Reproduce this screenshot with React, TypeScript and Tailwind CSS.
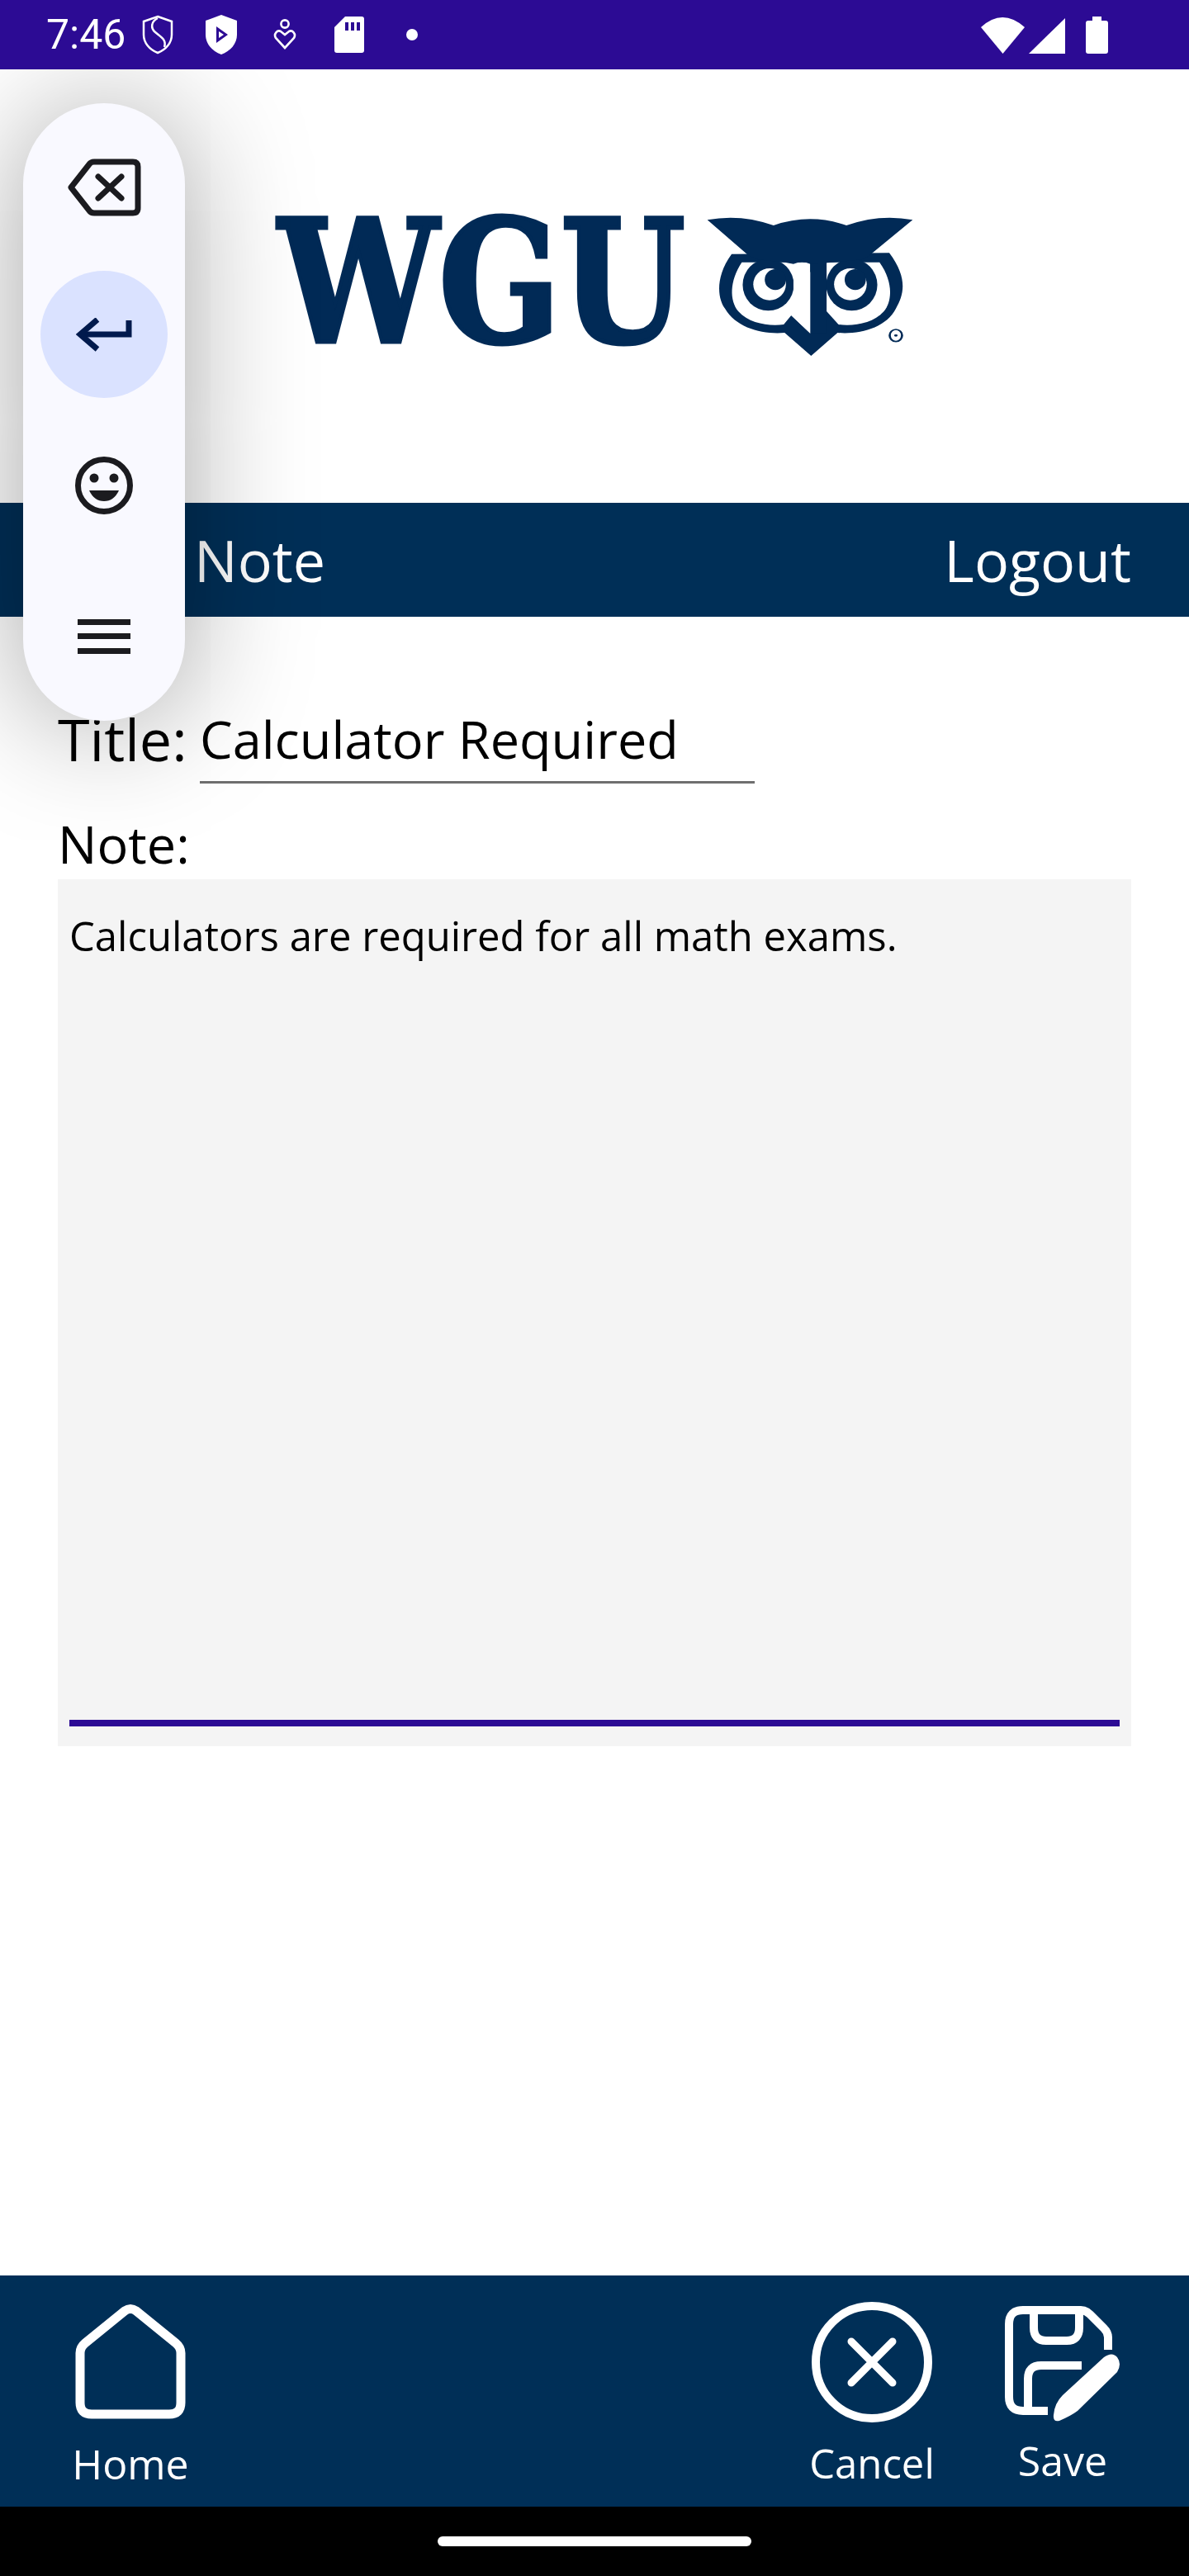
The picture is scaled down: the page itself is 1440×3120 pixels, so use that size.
import React from "react";

const font = { fontFamily: '"Open Sans", "Noto Sans", sans-serif' };

function Shield1() {
  return (
    <svg width="40" height="48" viewBox="0 0 40 48" fill="none" stroke="white" strokeWidth="2.5">
      <path d="M20 2 L37 8 V24 C37 34 30 42 20 46 C10 42 3 34 3 24 V8 Z" />
      <path d="M20 4 C12 8 11 16 17 21 C24 27 31 30 28 39" />
    </svg>
  );
}
function Shield2() {
  return (
    <svg width="40" height="50" viewBox="0 0 40 50">
      <path fill="white" d="M20 1 L39 8 V25 C39 36 31 45 20 49 C9 45 1 36 1 25 V8 Z" />
      <path fill="#2c0b94" d="M14 15 L28 25 L14 35 Z" />
      <path fill="white" d="M17 21 L23 25 L17 29 Z" />
    </svg>
  );
}
function PersonHeart() {
  return (
    <svg width="28" height="38" viewBox="0 0 28 38" fill="none" stroke="white" strokeWidth="2.6">
      <circle cx="14" cy="6" r="4.6" />
      <path d="M14 35 L3 23 C0 18 5 13 9 15 L14 19 L19 15 C23 13 28 18 25 23 Z" />
    </svg>
  );
}
function SdCard() {
  return (
    <svg width="36" height="44" viewBox="0 0 36 44">
      <path fill="white" d="M13 0 H33 Q36 0 36 3 V41 Q36 44 33 44 H3 Q0 44 0 41 V13 Z" />
      <rect x="13" y="7" width="4" height="10" fill="#2c0b94" />
      <rect x="20" y="7" width="4" height="10" fill="#2c0b94" />
      <rect x="27" y="7" width="4" height="10" fill="#2c0b94" />
    </svg>
  );
}

function WguOwl() {
  const navy = "#012a56";
  return (
    <svg width="254" height="170" viewBox="1030 95 475 510" preserveAspectRatio="none" className="ml-[24px] shrink-0">
      <path fill={navy} d="M1090 232 C1050 320 1060 400 1075 430 C1100 500 1160 525 1210 518 L1270 602 L1330 518 C1380 525 1440 500 1462 430 C1480 380 1490 320 1447 228 Z" />
      <path fill="white" d="M1113 262 C1085 330 1085 400 1105 440 C1130 485 1175 495 1208 488 L1225 455 L1268 520 V262 Z" />
      <path fill="white" d="M1425 262 C1455 330 1455 400 1435 440 C1410 485 1365 495 1332 488 L1305 440 V262 Z" />
      <rect x="1268" y="262" width="37" height="258" fill={navy} />
      <ellipse cx="1173" cy="344" rx="58" ry="94" fill={navy} />
      <ellipse cx="1362" cy="344" rx="58" ry="94" fill={navy} />
      <ellipse cx="1176" cy="342" rx="37" ry="58" fill="white" />
      <ellipse cx="1359" cy="342" rx="37" ry="58" fill="white" />
      <ellipse cx="1189" cy="325" rx="24" ry="38" fill={navy} />
      <ellipse cx="1370" cy="325" rx="24" ry="38" fill={navy} />
      <path fill="white" d="M1230 300 Q1232 262 1249 262 Q1266 262 1268 300 V520 L1225 455 Q1230 420 1230 385 Z" />
      <path fill={navy} d="M1035 108 Q1110 85 1185 128 Q1268 82 1350 128 Q1425 85 1500 108 L1400 240 L1385 252 L1320 262 L1268 268 Q1250 255 1230 268 L1210 262 L1150 252 L1130 240 Z" />
      <ellipse cx="1462" cy="528" rx="14" ry="22" fill="none" stroke={navy} strokeWidth="5" />
      <circle cx="1462" cy="528" r="4" fill={navy} />
    </svg>
  );
}

function Backspace() {
  return (
    <svg width="89" height="70" viewBox="0 0 89 70" fill="none" stroke="#1b1b1f" strokeWidth="7" strokeLinejoin="round" strokeLinecap="round">
      <path d="M4 35 L26 7 Q28 4 32 4 H79 Q85 4 85 10 V60 Q85 66 79 66 H32 Q28 66 26 63 Z" />
      <path d="M37 22 L65 48 M65 22 L37 48" />
    </svg>
  );
}
function EnterIcon() {
  return (
    <svg width="68" height="41" viewBox="0 0 68 41" fill="none" stroke="#001a4d" strokeWidth="7">
      <path d="M64 3 V20 H6" />
      <path d="M26 2 L5 20 L26 38" />
    </svg>
  );
}
function Smile() {
  return (
    <svg width="70" height="70" viewBox="0 0 70 70">
      <circle cx="35" cy="35" r="31.5" fill="none" stroke="#1b1b1f" strokeWidth="7" />
      <circle cx="23" cy="26" r="5.5" fill="#1b1b1f" />
      <circle cx="47" cy="26" r="5.5" fill="#1b1b1f" />
      <path d="M17 41 H53 Q47 54 35 54 Q23 54 17 41 Z" fill="#1b1b1f" />
    </svg>
  );
}
function Menu() {
  return (
    <svg width="64" height="42" viewBox="0 0 64 42" fill="#1b1b1f">
      <rect x="0" y="0" width="64" height="7" />
      <rect x="0" y="17" width="64" height="7" />
      <rect x="0" y="35" width="64" height="7" />
    </svg>
  );
}

function HomeIcon() {
  return (
    <svg width="134" height="140" viewBox="0 0 134 140" fill="none" stroke="white" strokeWidth="11" strokeLinejoin="round">
      <path d="M60 9 Q67 4 74 9 L122 48 Q128 53 128 60 V120 Q128 134 114 134 H20 Q6 134 6 120 V60 Q6 53 12 48 Z" />
    </svg>
  );
}
function CancelIcon() {
  return (
    <svg width="146" height="146" viewBox="0 0 146 146" fill="none" stroke="white" strokeLinecap="round">
      <circle cx="73" cy="73" r="68" strokeWidth="10" />
      <path d="M48 48 L98 98 M98 48 L48 98" strokeWidth="9" />
    </svg>
  );
}
function SaveIcon() {
  return (
    <svg width="140" height="140" viewBox="0 0 140 140" fill="none" stroke="white" strokeWidth="10" strokeLinejoin="round">
      <path d="M125 53 V38 Q125 32 120 27 L103 10 Q98 5 92 5 H22 Q5 5 5 22 V110 Q5 127 22 127 H52" />
      <path d="M35 5 V26 Q35 42 50 42 H75 Q90 42 90 26 V5" />
      <path d="M93 72 H44 Q28 72 28 88 V127" />
      <path fill="white" stroke="none" d="M120 62 Q130 55 136 62 Q142 70 136 80 L88 127 Q80 133 66 139 Q58 141 59 132 Q60 118 70 108 Z" />
    </svg>
  );
}

function StatusRight() {
  return (
    <div className="flex items-end">
      <svg width="53" height="44" viewBox="0 0 53 44" fill="white">
        <path d="M0 12 Q26 -12 53 12 L26.5 44 Z" />
      </svg>
      <svg className="ml-[5px]" width="44" height="43" viewBox="0 0 44 43" fill="white">
        <path d="M44 0 V43 H0 Z" />
      </svg>
      <svg className="ml-[25px]" width="27" height="45" viewBox="0 0 27 45" fill="white">
        <path d="M8 0 H19 V5 H24 Q27 5 27 8 V42 Q27 45 24 45 H3 Q0 45 0 42 V8 Q0 5 3 5 H8 Z" />
      </svg>
    </div>
  );
}

export default function App() {
  return (
    <div className="relative flex h-[3120px] w-[1440px] flex-col overflow-hidden bg-white text-black" style={font}>
      <div className="relative z-10 flex h-[84px] shrink-0 items-center justify-between bg-[#2c0b94] pl-[56px] pr-[98px] text-white">
        <div className="flex items-center">
          <span className="w-[115px] text-[50px] leading-none" style={{ fontFamily: "Roboto, sans-serif" }}>7:46</span>
          <Shield1 />
          <span className="ml-[37px]"><Shield2 /></span>
          <span className="ml-[43px]"><PersonHeart /></span>
          <span className="ml-[46px]"><SdCard /></span>
          <span className="ml-[51px] h-[14px] w-[14px] rounded-full bg-white" />
        </div>
        <StatusRight />
      </div>

      <div className="flex h-[525px] shrink-0 items-start pl-[337px] pt-[178px]">
        <div className="mt-[5px] h-[150px] w-[493px] shrink-0">
          <span
            className="block origin-left scale-x-[0.84] whitespace-nowrap text-[206px] leading-[150px] font-bold text-[#012a56] [-webkit-text-stroke:5px_#012a56]"
            style={{ fontFamily: '"DejaVu Serif", serif' }}
          >
            WGU
          </span>
        </div>
        <WguOwl />
      </div>

      <div className="flex h-[138px] shrink-0 items-center justify-between bg-[#002f57] pl-[235px] pr-[70px] text-[70px] text-white">
        <span>Note</span>
        <span>Logout</span>
      </div>

      <div className="flex flex-1 flex-col px-[70px] pt-[106px]">
        <div className="flex h-[96px] items-start">
          <span className="w-[172px] text-[70px] leading-[84px]">Title:</span>
          <div className="h-[96px] w-[672px] border-b-[3px] border-[#6f6f6f] text-[63px] leading-[84px]">Calculator Required</div>
        </div>
        <div className="mt-[31px] h-[85px] text-[63px] leading-[84px]">Note:</div>
        <div className="flex h-[1050px] flex-col justify-between bg-[#f4f4f4] px-[14px] pb-[24px] pt-[36px]">
          <div className="text-[49px] leading-[64px]">Calculators are required for all math exams.</div>
          <div className="h-[8px] bg-[#2c0b94]" />
        </div>
      </div>

      <div className="flex h-[280px] shrink-0 items-start bg-[#002f57] text-[50px] leading-[64px] text-white">
        <div className="ml-[91px] flex w-[134px] flex-col items-center pt-[34px]">
          <HomeIcon />
          <span className="mt-[22px]">Home</span>
        </div>
        <div className="ml-auto flex w-[146px] flex-col items-center pt-[32px]">
          <CancelIcon />
          <span className="mt-[17px] text-[49px]">Cancel</span>
        </div>
        <div className="ml-[88px] mr-[83px] flex w-[140px] flex-col items-center pt-[37px]">
          <SaveIcon />
          <span className="mt-[15px]">Save</span>
        </div>
      </div>

      <div className="flex h-[84px] shrink-0 items-center justify-center bg-black">
        <div className="h-[12px] w-[380px] rounded-full bg-white" />
      </div>

      <div className="absolute left-[28px] top-[125px] flex h-[748px] w-[196px] flex-col items-center rounded-[98px] bg-[#f9f9ff] pt-[67px] shadow-[0_6px_150px_rgba(0,0,0,0.36)]">
        <Backspace />
        <div className="mt-[66px] flex h-[154px] w-[154px] items-center justify-center rounded-full bg-[#dae2ff]"><EnterIcon /></div>
        <div className="mt-[71px]"><Smile /></div>
        <div className="mt-[127px]"><Menu /></div>
      </div>
    </div>
  );
}
